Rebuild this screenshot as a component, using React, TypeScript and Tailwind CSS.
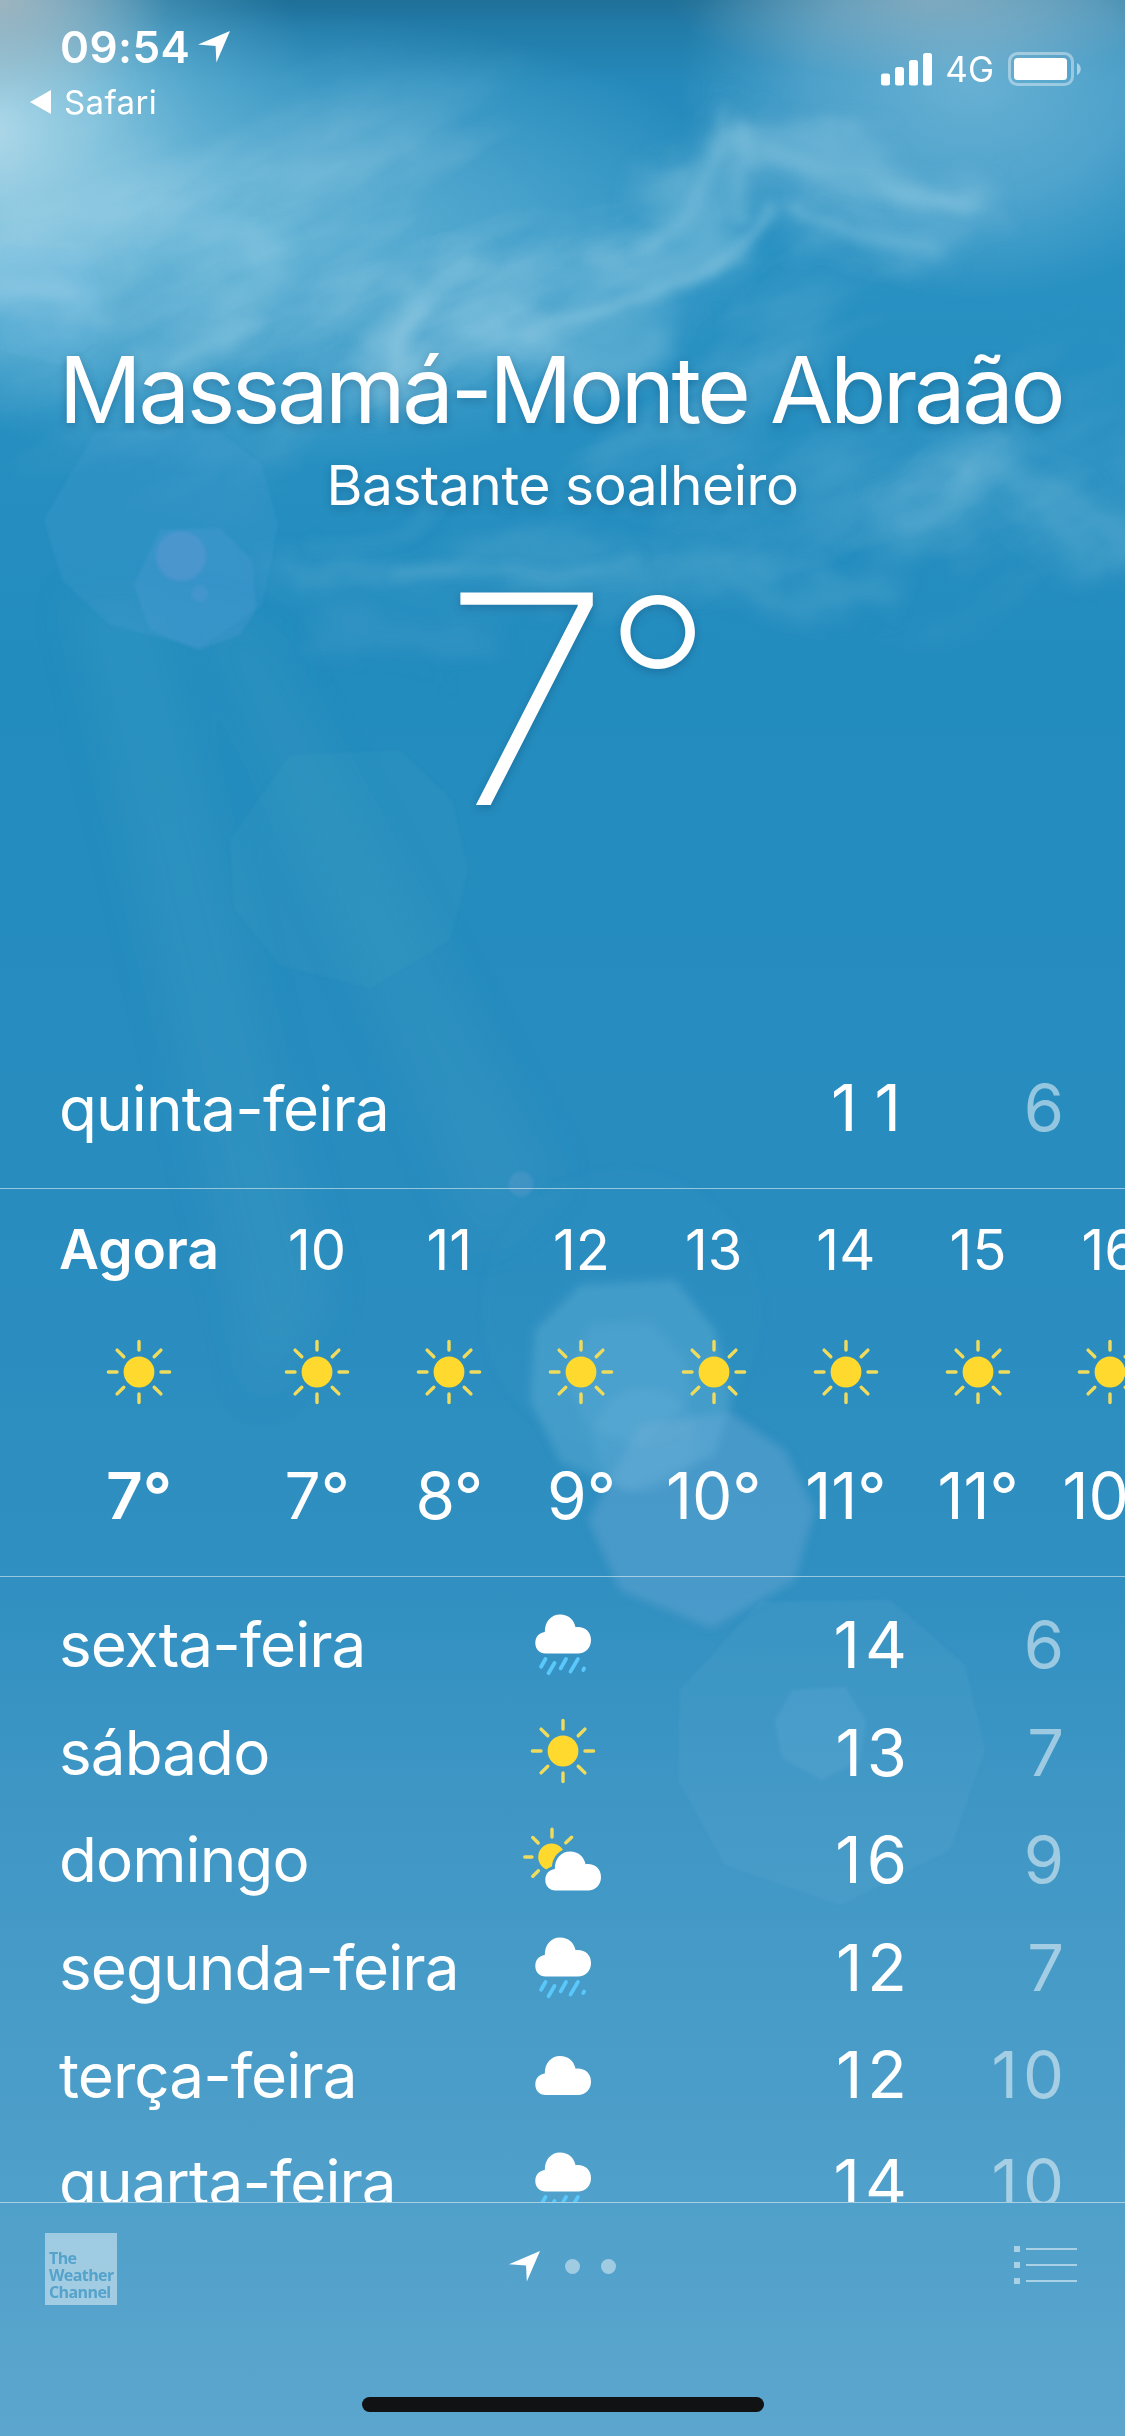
import React from "react";

type IconName = "sun" | "rain" | "cloud" | "partly";

const hours: { label: string; temp: string }[] = [
  { label: "10", temp: "7°" },
  { label: "11", temp: "8°" },
  { label: "12", temp: "9°" },
  { label: "13", temp: "10°" },
  { label: "14", temp: "11°" },
  { label: "15", temp: "11°" },
  { label: "16", temp: "10°" },
];

const days: { name: string; icon: IconName; high: string; low: string }[] = [
  { name: "sexta-feira", icon: "rain", high: "14", low: "6" },
  { name: "sábado", icon: "sun", high: "13", low: "7" },
  { name: "domingo", icon: "partly", high: "16", low: "9" },
  { name: "segunda-feira", icon: "rain", high: "12", low: "7" },
  { name: "terça-feira", icon: "cloud", high: "12", low: "10" },
  { name: "quarta-feira", icon: "rain", high: "14", low: "10" },
];

const CLOUD =
  "M10.5 39.5 C4.5 39.5 0.3 35 0.3 29 C0.3 23 4 18.6 9.8 18 C9.6 8 16 0.5 25 0.5 C33.5 0.5 38.8 5.6 40.6 13.2 C49.5 12.2 56 17.5 56 26 C56 34 50.5 39.5 43 39.5 Z";

function SunIcon() {
  return (
    <svg viewBox="-33 -33 66 66" className="size-[66px] shrink-0">
      <circle r="15.4" fill="#ffd92e" />
      <g stroke="#f0dc5c" strokeWidth="3.4" strokeLinecap="round">
        {[0, 45, 90, 135, 180, 225, 270, 315].map((a) => (
          <line key={a} x1="0" y1={a % 90 ? -21.5 : -22} x2="0" y2={a % 90 ? -31 : -30.6} transform={`rotate(${a})`} />
        ))}
      </g>
    </svg>
  );
}

/* Icons share an 80x80 box whose centre is 25px above the row's baseline. */
function DayIcon({ name }: { name: IconName }) {
  if (name === "sun") return <SunIcon />;
  return (
    <svg viewBox="0 0 80 80" className="size-20 shrink-0">
      {name === "rain" && (
        <g>
          <path d={CLOUD} transform="translate(12 11)" fill="#fff" />
          <g stroke="#5ac8fa" strokeWidth="3.8" strokeLinecap="round">
            <path d="M22.5 56 L18.1 63.8M31.5 60 L25.5 70.2M43 56 L37.7 65.4M54.9 56 L47.5 68.6M61.1 65.4 L60.3 67" />
          </g>
        </g>
      )}
      {name === "cloud" && <path d={CLOUD} transform="translate(12 21.5)" fill="#fff" />}
      {name === "partly" && (
        <g transform="translate(-1 0)">
          <g stroke="#f0dc5c" strokeWidth="3.4" strokeLinecap="round">
            <path d="M30 12.2V20M10.8 20.5L16.2 26M49.6 20.2L43.8 25.8M2.8 40H10M10.8 59.2L16.4 53.8" transform="translate(0 -1)" />
          </g>
          <circle cx="29.6" cy="39" r="13.4" fill="#ffd92e" />
          <path d={CLOUD} transform="translate(23 33)" fill="#3f98c6" stroke="#3f98c6" strokeWidth="6" />
          <path d={CLOUD} transform="translate(23 33)" fill="#fff" />
        </g>
      )}
    </svg>
  );
}

function LocationArrow({ className }: { className: string }) {
  return (
    <svg viewBox="0 0 32 32" className={className}>
      <path d="M32 0 L18.4 31.6 L17.6 15 L0 13.6 Z" fill="#fff" />
    </svg>
  );
}

function Sky() {
  return (
    <svg viewBox="0 0 1125 2436" className="absolute inset-0 -z-10 h-full w-full" aria-hidden="true">
      <defs>
        <linearGradient id="base" x1="0" y1="0" x2="0" y2="1">
          <stop offset="0" stopColor="#1f7099" />
          <stop offset="0.012" stopColor="#227ca9" />
          <stop offset="0.035" stopColor="#258abb" />
          <stop offset="0.1" stopColor="#2991c2" />
          <stop offset="0.28" stopColor="#238cbe" />
          <stop offset="0.5" stopColor="#298cbf" />
          <stop offset="0.64" stopColor="#2f8fc0" />
          <stop offset="0.75" stopColor="#4097c5" />
          <stop offset="0.9" stopColor="#4fa0ca" />
          <stop offset="1" stopColor="#5ca6ce" />
        </linearGradient>
        <radialGradient id="glowLeft">
          <stop offset="0" stopColor="#c4e4ef" stopOpacity="0.85" />
          <stop offset="0.3" stopColor="#aedbea" stopOpacity="0.66" />
          <stop offset="0.65" stopColor="#8ccbe3" stopOpacity="0.3" />
          <stop offset="1" stopColor="#7cc4e0" stopOpacity="0" />
        </radialGradient>
        <radialGradient id="glowHaze">
          <stop offset="0" stopColor="#8ccbe3" stopOpacity="0.6" />
          <stop offset="0.5" stopColor="#7cc0dd" stopOpacity="0.38" />
          <stop offset="1" stopColor="#7cc4e0" stopOpacity="0" />
        </radialGradient>
        <radialGradient id="glowRight">
          <stop offset="0" stopColor="#7fbddb" stopOpacity="0.75" />
          <stop offset="0.55" stopColor="#76b9da" stopOpacity="0.5" />
          <stop offset="1" stopColor="#6db4d6" stopOpacity="0" />
        </radialGradient>
        <radialGradient id="corner">
          <stop offset="0" stopColor="#a3b6bf" stopOpacity="0.9" />
          <stop offset="1" stopColor="#a3b6bf" stopOpacity="0" />
        </radialGradient>
        <filter id="b2" x="-20%" y="-20%" width="140%" height="140%"><feGaussianBlur stdDeviation="1.5" /></filter>
        <filter id="b4" x="-20%" y="-20%" width="140%" height="140%"><feGaussianBlur stdDeviation="4" /></filter>
        <filter id="b20" x="-50%" y="-50%" width="200%" height="200%"><feGaussianBlur stdDeviation="20" /></filter>
        <filter id="cirrusSoft" filterUnits="userSpaceOnUse" x="-60" y="0" width="1260" height="760">
          <feGaussianBlur stdDeviation="16" result="s" />
          <feTurbulence type="fractalNoise" baseFrequency="0.009 0.014" numOctaves="4" seed="5" result="n" />
          <feDisplacementMap in="s" in2="n" scale="90" xChannelSelector="R" yChannelSelector="G" />
          <feGaussianBlur stdDeviation="3" />
        </filter>
        <filter id="cirrusFine" filterUnits="userSpaceOnUse" x="-60" y="0" width="1260" height="760">
          <feGaussianBlur stdDeviation="6" result="s" />
          <feTurbulence type="fractalNoise" baseFrequency="0.008 0.012" numOctaves="3" seed="11" result="n" />
          <feDisplacementMap in="s" in2="n" scale="34" xChannelSelector="R" yChannelSelector="G" />
          <feGaussianBlur stdDeviation="3" />
        </filter>
        <filter id="wisps" filterUnits="userSpaceOnUse" x="-400" y="-300" width="2000" height="1500">
          <feTurbulence type="fractalNoise" baseFrequency="0.0035 0.009" numOctaves="5" seed="8" />
          <feColorMatrix values="0 0 0 0 0.66  0 0 0 0 0.85  0 0 0 0 0.93  2.6 0 0 0 -1.15" />
        </filter>
        <radialGradient id="wispFade">
          <stop offset="0" stopColor="#fff" stopOpacity="0.75" />
          <stop offset="0.5" stopColor="#fff" stopOpacity="0.5" />
          <stop offset="1" stopColor="#fff" stopOpacity="0" />
        </radialGradient>
        <mask id="wispMask" maskUnits="userSpaceOnUse" x="-100" y="0" width="1300" height="800">
          <ellipse cx="380" cy="290" rx="560" ry="260" fill="url(#wispFade)" />
          <ellipse cx="900" cy="470" rx="460" ry="200" fill="url(#wispFade)" opacity="0.5" />
        </mask>
      </defs>

      <rect width="1125" height="2436" fill="url(#base)" />

      {/* sun haze in the upper corners */}
      <ellipse cx="270" cy="240" rx="500" ry="230" fill="url(#glowHaze)" />
      <ellipse cx="-10" cy="130" rx="330" ry="300" fill="url(#glowLeft)" />
      <ellipse cx="0" cy="0" rx="170" ry="110" fill="url(#corner)" />
      <ellipse cx="970" cy="80" rx="290" ry="220" fill="url(#glowRight)" />
      <ellipse cx="930" cy="0" rx="260" ry="80" fill="url(#corner)" opacity="0.6" />

      {/* cirrus */}
      <g mask="url(#wispMask)">
        <g transform="rotate(-24 560 350)">
          <rect x="-400" y="-300" width="2000" height="1500" filter="url(#wisps)" opacity="0.5" />
        </g>
      </g>
      <g fill="none" stroke="#9ccfe6" strokeLinecap="round" filter="url(#cirrusSoft)">
        <path d="M725 130 C725 190 690 230 620 270" strokeWidth="60" opacity="0.38" />
        <path d="M735 215 C700 275 620 300 520 330" strokeWidth="30" opacity="0.36" />
        <path d="M740 130 C810 170 890 175 980 200" strokeWidth="34" opacity="0.5" />
        <path d="M790 200 C830 230 880 238 940 245" strokeWidth="24" opacity="0.4" />
        <path d="M375 370 C400 340 395 315 445 270" strokeWidth="44" opacity="0.5" />
        <path d="M140 380 C190 345 240 345 260 290 C255 260 230 240 190 225" strokeWidth="40" opacity="0.36" />
        <path d="M500 350 C560 365 590 355 650 345" strokeWidth="50" opacity="0.4" />
        <path d="M-20 285 C20 275 40 290 75 300" strokeWidth="44" opacity="0.5" />
        <path d="M890 530 C950 515 960 470 985 455 C1040 490 1080 520 1140 560" strokeWidth="40" opacity="0.28" />
        <path d="M280 560 C400 590 420 560 640 566 C740 580 800 590 880 592" strokeWidth="26" opacity="0.24" />
        <path d="M320 630 C400 655 440 645 500 625" strokeWidth="20" opacity="0.2" />
      </g>
      <g fill="none" stroke="#a6d6ea" strokeLinecap="round" filter="url(#cirrusFine)">
        <path d="M772 205 C750 265 650 300 525 332" strokeWidth="10" opacity="0.5" />
        <path d="M722 110 C722 160 700 215 640 255" strokeWidth="9" opacity="0.3" />
        <path d="M738 120 C745 150 745 180 742 215" strokeWidth="9" opacity="0.26" />
        <path d="M760 150 C830 185 900 185 970 206" strokeWidth="9" opacity="0.32" />
        <path d="M790 205 C840 236 890 240 935 246" strokeWidth="9" opacity="0.32" />
        <path d="M385 370 C400 345 395 325 430 300" strokeWidth="12" opacity="0.36" />
        <path d="M165 370 C200 350 235 345 255 320" strokeWidth="9" opacity="0.3" />
        <path d="M0 290 C25 285 45 298 66 296" strokeWidth="12" opacity="0.36" />
        <path d="M905 525 C960 510 970 480 980 460" strokeWidth="8" opacity="0.2" />
        <path d="M400 575 C480 560 560 572 640 567" strokeWidth="8" opacity="0.22" />
        <path d="M300 545 C380 550 420 530 440 500" strokeWidth="7" opacity="0.14" />
      </g>

      {/* light rays */}
      <g fill="#4fb0c8" filter="url(#b20)">
        <path d="M70 600 L160 600 L330 1300 L260 1400 Z" opacity="0.16" />
        <path d="M190 600 L270 640 L560 1180 L480 1250 Z" opacity="0.12" />
      </g>

      {/* lens flares */}
      <g filter="url(#b2)">
        <path d="M95 432 L215 428 L262 465 L278 525 L262 605 L200 648 L110 625 L62 580 L44 520 Z" fill="#5aa9dc" opacity="0.15" />
        <path d="M160 530 L220 528 L252 560 L256 610 L240 635 L198 650 L150 630 L134 585 Z" fill="#6a9fe0" opacity="0.2" />
        <circle cx="181" cy="556" r="25" fill="#7f9fdc" opacity="0.26" />
        <circle cx="200" cy="594" r="8" fill="#7f9fdc" opacity="0.18" />
        <path d="M290 755 L400 750 L452 800 L468 870 L450 940 L370 988 L280 965 L235 910 L230 840 Z" fill="#4fb0c8" opacity="0.1" />
        <path d="M0 245 L90 250 L104 290 L98 340 L60 365 L0 350 Z" fill="#6fbfe8" opacity="0.18" />
        <circle cx="521" cy="1184" r="12.5" fill="#7fa9d6" opacity="0.22" />
      </g>
      <g filter="url(#b4)">
        <circle cx="622" cy="1310" r="140" fill="#4fb0d0" opacity="0.06" />
        <path d="M580 1285 L675 1280 L715 1330 L732 1400 L715 1455 L630 1492 L560 1462 L530 1400 L535 1330 Z" fill="#7cc0e0" opacity="0.27" />
        <path d="M590 1325 L650 1322 L685 1360 L690 1400 L640 1445 L590 1430 L565 1380 Z" fill="#7cc0e0" opacity="0.14" />
        <circle cx="645" cy="1440" r="52" fill="#7cc0e0" opacity="0.14" />
        <path d="M640 1425 L730 1412 L785 1450 L815 1510 L795 1580 L712 1628 L620 1590 L588 1520 Z" fill="#7cb0de" opacity="0.32" />
      </g>
      <g filter="url(#b2)">
        <path d="M760 1602 L890 1600 L965 1665 L985 1750 L950 1850 L840 1905 L725 1865 L678 1780 L680 1690 Z" fill="#6fb2dc" opacity="0.13" />
        <path d="M792 1690 L845 1687 L866 1720 L860 1760 L822 1780 L782 1758 L775 1720 Z" fill="#7fbae0" opacity="0.16" />
      </g>
    </svg>
  );
}

export default function App() {
  return (
    <div className="relative isolate flex h-[2436px] w-[1125px] flex-col overflow-hidden font-['Inter',sans-serif] text-white">
      <Sky />

      {/* status bar */}
      <header className="flex h-[132px] shrink-0 items-start justify-between">
        <div className="flex flex-col">
          <div className="mt-[25px] ml-[60px] flex h-11 items-center">
            <span className="text-[44px] leading-[44px] font-semibold tracking-[0.4px]">09:54</span>
            <LocationArrow className="ml-[8px] size-8" />
          </div>
          <div className="mt-[13px] ml-[30px] flex h-10 items-center">
            <svg viewBox="0 0 21 24" className="h-6 w-[21px]">
              <path d="M0 12 L21 0 V24 Z" fill="#fff" />
            </svg>
            <span className="ml-[13px] text-[33px] leading-10 tracking-[0.4px]">Safari</span>
          </div>
        </div>
        <div className="mt-[47px] mr-[43px] flex h-11 items-center">
          <svg viewBox="0 0 51 33" className="h-[33px] w-[51px]" fill="#fff">
            <rect x="0" y="20.5" width="9" height="12" rx="2.5" />
            <rect x="14" y="14" width="9" height="18.5" rx="2.5" />
            <rect x="28" y="7" width="9" height="25.5" rx="2.5" />
            <rect x="42" y="0" width="9" height="32.5" rx="2.5" />
          </svg>
          <span className="ml-[13px] text-[35px] leading-[44px]">4G</span>
          <svg viewBox="0 0 74 34" className="ml-[14px] h-[34px] w-[74px]">
            <rect x="1.5" y="1.5" width="63" height="31" rx="8" fill="none" stroke="#fff" strokeOpacity="0.4" strokeWidth="3" />
            <rect x="6" y="6" width="53" height="22" rx="3.5" fill="#fff" />
            <path d="M69 11 C74 13 74 21 69 23 Z" fill="#fff" fillOpacity="0.5" />
          </svg>
        </div>
      </header>

      {/* current conditions */}
      <section className="flex h-[923px] shrink-0 flex-col items-center whitespace-nowrap [text-shadow:0_3px_8px_rgba(0,40,80,0.25)]">
        <h1 className="mt-[202px] mr-[4px] text-[92px] leading-[112px] font-normal tracking-[-3.45px]">Massamá-Monte Abraão</h1>
        <p className="mt-[3px] text-[55px] leading-[72px] tracking-[-0.45px]">Bastante soalheiro</p>
        <div className="mt-[8px] flex items-start pl-[31px] font-[250]">
          <span className="inline-block origin-left scale-x-[1.035] text-[292px] leading-[340px]">7</span>
          <span className="ml-[-2px] text-[242px] leading-[313px]">°</span>
        </div>
      </section>

      {/* today */}
      <section className="flex h-[134px] shrink-0 items-center border-b border-white/50 pr-[56px] pb-[27px] pl-[59px] text-[62px]">
        <span className="flex-1 tracking-[-0.9px]">quinta-feira</span>
        <span className="text-right text-[65px] tracking-[17px]">11</span>
        <span className="w-[151px] text-right text-[65px] tracking-[5px] text-white/50">6</span>
      </section>

      {/* hourly strip */}
      <section className="flex h-[388px] shrink-0 overflow-hidden border-b border-white/50">
        <div className="ml-[39px] flex w-[200px] shrink-0 flex-col items-center font-semibold">
          <span className="mt-[24px] text-[55px] leading-[72px]">Agora</span>
          <div className="mt-[54px]"><SunIcon /></div>
          <span className="mt-[52px] text-[64px] leading-[78px]">7°</span>
        </div>
        <div className="ml-[12px] flex shrink-0">
          {hours.map((h) => (
            <div key={h.label} className="flex w-[132.2px] shrink-0 flex-col items-center">
              <span className="mt-[25px] text-[56px] leading-[72px]">{h.label}</span>
              <div className="mt-[53px]"><SunIcon /></div>
              <span className="mt-[52px] text-[64px] leading-[78px]">{h.temp}</span>
            </div>
          ))}
        </div>
      </section>

      {/* daily forecast */}
      <section className="h-[625px] shrink-0 overflow-hidden">
        <div className="mt-[14px] flex flex-col">
          {days.map((d) => (
            <div key={d.name} className="flex h-[107.6px] shrink-0 items-center pr-[56px] pl-[59px] text-[62px]">
              <span className="w-[444px] tracking-[-0.95px]">{d.name}</span>
              <div className="mb-[3px] flex h-20 w-[120px] items-center justify-center">
                <DayIcon name={d.icon} />
              </div>
              <span className="flex-1 text-right text-[65px] tracking-[5px]">{d.high}</span>
              <span className="w-[157px] text-right text-[65px] tracking-[5px] text-white/50">{d.low}</span>
            </div>
          ))}
        </div>
      </section>

      {/* toolbar */}
      <footer className="flex flex-1 flex-col items-center border-t border-white/50">
        <div className="flex w-full items-start justify-between pr-[48px] pl-[45px]">
          <div className="mt-[30px] flex h-[72px] w-[72px] flex-col justify-end bg-white/45 pb-[4px] pl-[4px] font-['Open_Sans',sans-serif] text-[16px] leading-[17px] font-bold tracking-[-0.6px] text-[#55a2cb]">
            <span>The</span>
            <span>Weather</span>
            <span>Channel</span>
          </div>
          <div className="mt-[48px] mr-[7px] flex items-center">
            <LocationArrow className="size-[31px]" />
            <span className="ml-[25px] size-[15px] rounded-full bg-white/45" />
            <span className="ml-[21px] size-[15px] rounded-full bg-white/45" />
          </div>
          <div className="mt-[43px] flex flex-col gap-[10px]">
            {[0, 1, 2].map((i) => (
              <div key={i} className="flex h-[6px] items-center gap-[6px]">
                <span className="size-[6px] bg-white/50" />
                <span className="h-[2px] w-[51px] bg-white/50" />
              </div>
            ))}
          </div>
        </div>
        <div className="mt-[92px] h-[15px] w-[402px] rounded-full bg-[#111213]" />
      </footer>
    </div>
  );
}
